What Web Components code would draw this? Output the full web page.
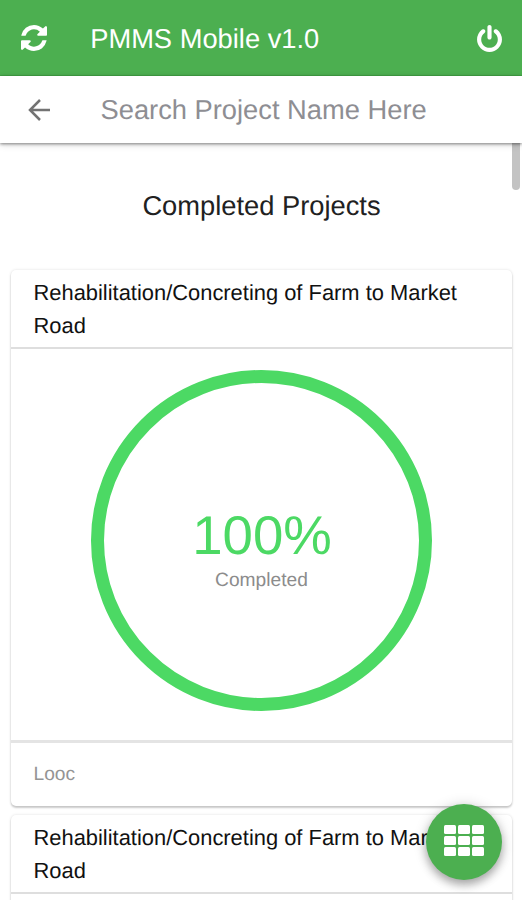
<!DOCTYPE html>
<html lang="en">
<head>
<meta charset="utf-8">
<title>PMMS Mobile</title>
<style>
html,body{margin:0;height:100%;overflow:hidden}
body{font-family:"Liberation Sans",Arial,sans-serif;background:#fff;text-rendering:geometricPrecision}
</style>
</head>
<body>
<pmms-app></pmms-app>
<script>
const define = (name, html) => customElements.define(name, class extends HTMLElement {
  constructor() {
    super();
    this.attachShadow({ mode: 'open' }).innerHTML = html;
  }
});

define('app-bar', `
<style>
:host{display:flex;align-items:center;height:76px;box-sizing:border-box;padding:1px 20px 0 21px;background:#4caf50;color:#fff;border-bottom:1px solid #43a547}
svg{display:block;fill:currentColor;flex:none}
.title{flex:1;padding-left:43.2px;padding-top:1px;font-size:27.3px;line-height:32px;white-space:nowrap}
</style>
<svg width="26" height="26" viewBox="0 128 1536 1536"><path d="M1511 1056q0 5-1 7-64 268-268 434.5t-478 166.5q-146 0-282.5-55t-243.5-157l-129 129q-19 19-45 19t-45-19-19-45v-448q0-26 19-45t45-19h448q26 0 45 19t19 45-19 45l-137 137q71 66 161 102t187 36q134 0 250-65t186-179q11-17 53-117 8-23 30-23h192q13 0 22.500 9.500t9.500 22.500zm25-800v448q0 26-19 45t-45 19h-448q-26 0-45-19t-19-45 19-45l138-138q-148-137-349-137-134 0-250 65t-186 179q-11 17-53 117-8 23-30 23h-199q-13 0-22.500-9.500t-9.500-22.500v-7q65-268 270-434.500t480-166.500q146 0 284 55.500t245 156.500l130-129q19-19 45-19t45 19 19 45z"/></svg>
<div class="title"><slot></slot></div>
<svg width="25" height="27" viewBox="0 0 1536 1664"><path d="M1536 896q0 156-61 298t-164 245-245 164-298 61-298-61-245-164-164-245-61-298q0-182 80.500-343t226.500-270q43-32 95.500-25t83.500 50q32 42 24.500 94.500t-49.500 84.500q-98 74-151.500 181t-53.500 228q0 104 40.500 198.500t109.500 163.500 163.500 109.500 198.500 40.500 198.500-40.500 163.500-109.500 109.500-163.500 40.500-198.500q0-121-53.500-228t-151.500-181q-42-32-49.500-84.500t24.500-94.500q31-43 84-50t95 25q146 109 226.500 270t80.500 343zm-640-768v640q0 52-38 90t-90 38-90-38-38-90v-640q0-52 38-90t90-38 90 38 38 90z"/></svg>`);

define('search-bar', `
<style>
:host{display:flex;align-items:center;height:67px;box-sizing:border-box;padding:1px 28px 0;background:#fff;color:#8e8e93;box-shadow:0 1px 3px rgba(0,0,0,.45),0 2px 7px rgba(0,0,0,.13);position:relative;z-index:2}
svg{display:block;fill:none;stroke:#737373;stroke-width:2.5}
div{padding-left:49.500px;font-size:27.3px;line-height:32px;white-space:nowrap}
</style>
<svg width="23" height="22" viewBox="0 0 23 22"><path d="M22 11H2M12 1 2 11l10 10"/></svg>
<div><slot></slot></div>`);

define('progress-ring', `
<style>
:host{display:flex;flex-direction:column;align-items:center;justify-content:center;width:341px;height:341px;box-sizing:border-box;border:13.5px solid #4cd964;border-radius:50%;padding-top:19px}
.value{font-size:54.6px;line-height:58px;color:#4cd964;margin-left:2px}
.label{font-size:19.2px;line-height:24px;color:#8c8c8c;margin-top:4px;padding-left:1px}
</style>
<div class="value"><slot name="value"></slot></div>
<div class="label"><slot></slot></div>`);

define('project-card', `
<style>
:host{display:block;width:501px;border-radius:5px;background:#fff;box-shadow:0 2px 2px rgba(0,0,0,.19),0 0 3px rgba(0,0,0,.13)}
header{height:77px;box-sizing:border-box;padding:6px 23px 0;font-size:21.9px;line-height:33px;color:#111}
.body{display:flex;justify-content:center;height:393px;box-sizing:border-box;padding-top:21px;border-top:2px solid #dedede}
footer{height:66px;box-sizing:border-box;border-top:3px solid #e4e4e4;padding:16px 23px 0;font-size:19.2px;line-height:32px;color:#949494}
</style>
<header><slot name="title"></slot></header>
<div class="body"><slot></slot></div>
<footer><slot name="place"></slot></footer>`);

define('menu-fab', `
<style>
:host{position:absolute;left:426px;top:804px;width:76px;height:76px;border-radius:50%;background:#4caf50;display:grid;place-items:center;box-shadow:0 5px 9px rgba(0,0,0,.28),0 1px 14px rgba(0,0,0,.16);z-index:3}
div{display:grid;grid-template-columns:repeat(3,12px);grid-template-rows:repeat(3,9px);gap:2px;margin-top:-4px}
i{background:#fff;border-radius:1.5px}
</style>
<div><i></i><i></i><i></i><i></i><i></i><i></i><i></i><i></i><i></i></div>`);

define('pmms-app', `
<style>
:host{display:flex;flex-direction:column;width:522px;height:900px;overflow:hidden;position:relative;background:#fff}
main{flex:1;min-height:0;overflow:hidden;display:flex;flex-direction:column;align-items:center;position:relative}
h1{margin:47px 0 0;padding-left:1px;font-weight:400;font-size:27.3px;line-height:32px;color:#212121;height:80px;flex:none}
project-card{flex:none;margin-bottom:9px}
.thumb{position:absolute;right:2px;top:-10px;width:8px;height:57px;border-radius:4px;background:#c3c3c3}
</style>
<app-bar>PMMS Mobile v1.0</app-bar>
<search-bar>Search Project Name Here</search-bar>
<main>
  <h1>Completed Projects</h1>
  <project-card>
    <span slot="title">Rehabilitation/Concreting of Farm to Market Road</span>
    <progress-ring><span slot="value">100%</span>Completed</progress-ring>
    <span slot="place">Looc</span>
  </project-card>
  <project-card>
    <span slot="title">Rehabilitation/Concreting of Farm to Market Road</span>
  </project-card>
  <div class="thumb"></div>
</main>
<menu-fab></menu-fab>`);
</script>
</body>
</html>
